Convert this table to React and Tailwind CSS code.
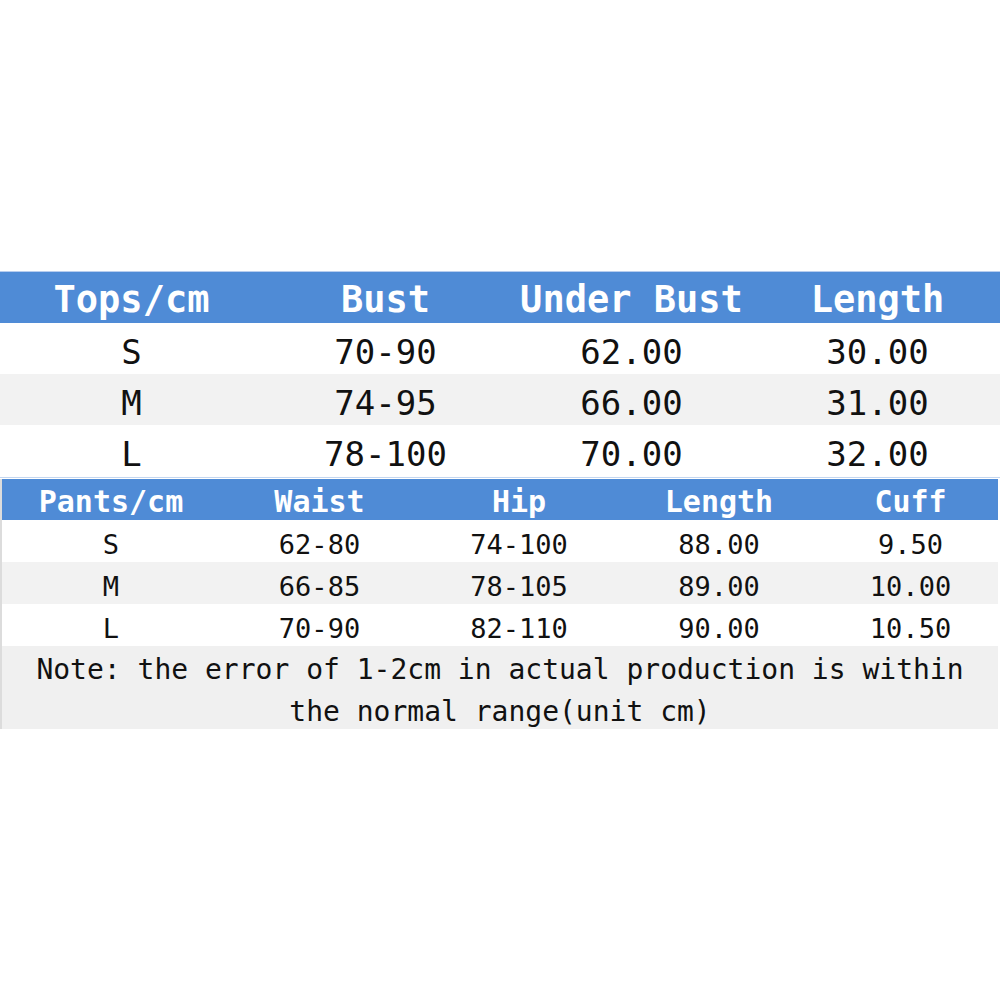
import React from "react";

const mono = { fontFamily: '"DejaVu Sans Mono", "Liberation Mono", monospace' };

const tops = [
  ["S", "70-90", "62.00", "30.00"],
  ["M", "74-95", "66.00", "31.00"],
  ["L", "78-100", "70.00", "32.00"],
];
const pants = [
  ["S", "62-80", "74-100", "88.00", "9.50"],
  ["M", "66-85", "78-105", "89.00", "10.00"],
  ["L", "70-90", "82-110", "90.00", "10.50"],
];
const topCols = "grid grid-cols-[263px_245px_247px_245px]";
const pantCols = "grid grid-cols-[218px_199px_200px_200px_183px]";

export default function App() {
  return (
    <div className="w-[1000px] h-[1000px] bg-white text-[#111]" style={mono}>
      <div className="h-[271px]" />
      <div className="h-px bg-[#b7cdee]" />
      <div className={`${topCols} h-[51px] bg-[#4f8bd6] text-white font-bold text-[37px] items-center`}>
        {["Tops/cm", "Bust", "Under Bust", "Length"].map((h, i) => (
          <div key={i} className="text-center leading-none pt-[4px]">{h}</div>
        ))}
      </div>
      {tops.map((r, ri) => (
        <div key={ri} className={`${topCols} h-[51px] items-center text-[34px] ${ri === 1 ? "bg-[#f2f2f2]" : "bg-white"}`}>
          {r.map((c, ci) => (
            <div key={ci} className="text-center leading-none pt-[6px]">{c}</div>
          ))}
        </div>
      ))}
      <div className="h-px bg-white" />
      <div className="h-px bg-[#c3d6f0]" />
      <div className="h-px bg-white" />
      <div className="border-l-2 border-[#dcdcdc] w-[998px]">
        <div className={`${pantCols} h-[41px] bg-[#4f8bd6] text-white font-bold text-[30px] items-center`}>
          {["Pants/cm", "Waist", "Hip", "Length", "Cuff"].map((h, i) => (
            <div key={i} className="text-center leading-none pt-[5px]">{h}</div>
          ))}
        </div>
        {pants.map((r, ri) => (
          <div key={ri} className={`${pantCols} h-[42px] items-center text-[27px] ${ri === 1 ? "bg-[#f2f2f2]" : "bg-white"}`}>
            {r.map((c, ci) => (
              <div key={ci} className="text-center leading-none pt-[6px]">{c}</div>
            ))}
          </div>
        ))}
        <div className="h-[83px] bg-[#f0f0f0] text-[28px] leading-[42px] text-center pt-[3px]">
          <div>Note: the error of 1-2cm in actual production is within</div>
          <div>the normal range(unit cm)</div>
        </div>
      </div>
    </div>
  );
}
